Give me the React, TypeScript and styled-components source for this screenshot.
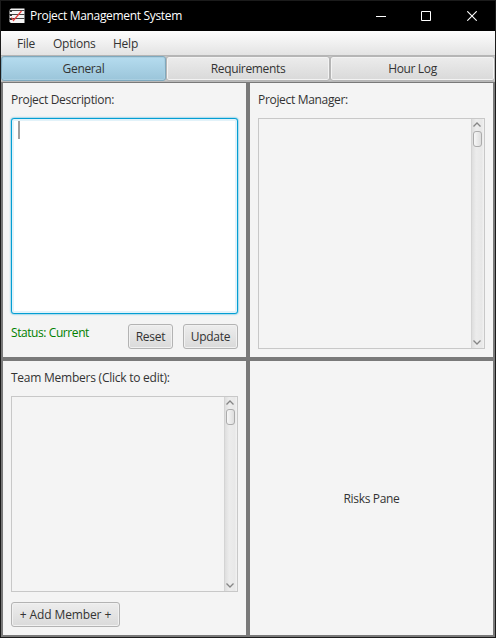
import React from "react";
import styled, { createGlobalStyle } from "styled-components";

const GlobalStyle = createGlobalStyle`
  html, body { margin: 0; padding: 0; background: #1b1b1b; }
  *, *::before, *::after { box-sizing: border-box; }
  button, textarea { font: inherit; color: inherit; letter-spacing: inherit; margin: 0; }
`;

const Window = styled.div`
  width: 496px;
  height: 638px;
  display: flex;
  flex-direction: column;
  border: 1px solid #1b1b1b;
  overflow: hidden;
  font-family: "Open Sans", "Noto Sans", sans-serif;
  font-size: 12px;
  line-height: 16px;
  letter-spacing: -0.24px;
  color: #333;
  background: #f4f4f4;
`;

const TitleBar = styled.header`
  flex: none;
  height: 30px;
  display: flex;
  align-items: center;
  padding-left: 8px;
  background: #000;
  color: #fff;
`;

const Title = styled.span`
  flex: 1;
  margin-left: 5px;
  letter-spacing: -0.32px;
  white-space: nowrap;
`;

const WindowButton = styled.button`
  width: 44px;
  height: 30px;
  padding: 0;
  border: 0;
  background: transparent;
  display: flex;
  align-items: center;
  justify-content: center;
`;

const WindowButtons = styled.div`
  display: grid;
  grid-template-columns: 45px 46px 46px;
  justify-items: center;
`;

const MenuBar = styled.nav`
  flex: none;
  height: 25px;
  display: flex;
  align-items: center;
  gap: 18px;
  padding: 2px 16px 0;
  background: linear-gradient(#fdfdfd, #e3e3e3);
  border-bottom: 1px solid #b5b5b5;
`;

const MenuItem = styled.span<{ $width: number }>`
  width: ${(p) => p.$width}px;
  white-space: nowrap;
`;

const Tabs = styled.div`
  flex: none;
  height: 26px;
  display: grid;
  grid-template-columns: 165px 164px 165px;
  background: #c4c4c4;
  border-bottom: 1px solid #b9b9b9;
`;

const Tab = styled.button<{ $active?: boolean }>`
  height: 25px;
  padding: 1px 0 0;
  letter-spacing: -0.34px;
  border: 1px solid ${(p) => (p.$active ? "#7fa9be" : "#b5b5b5")};
  border-radius: 3px;
  background: ${(p) =>
    p.$active ? "linear-gradient(#b5dcef, #9bc5da)" : "linear-gradient(#ececec, #d9d9d9)"};
  box-shadow: inset 0 0 0 1px ${(p) => (p.$active ? "#aacfe1" : "#f3f3f3")};
`;

const Panes = styled.main`
  flex: 1;
  display: grid;
  grid-template-columns: 243px 243px;
  grid-template-rows: 274px 274px;
  gap: 4px;
  padding: 1px 2px 2px;
  background: #797979;
`;

const Pane = styled.section<{ $centered?: boolean }>`
  display: flex;
  flex-direction: column;
  padding: 9px 8px 8px;
  background: #f4f4f4;
  ${(p) => p.$centered && "align-items: center; justify-content: center; letter-spacing: -0.34px;"}
`;

const Heading = styled.div<{ $spacing?: number }>`
  height: 26px;
  letter-spacing: ${(p) => p.$spacing ?? -0.32}px;
  white-space: nowrap;
`;

const Description = styled.textarea`
  display: block;
  width: 227px;
  height: 196px;
  padding: 4px 7px;
  resize: none;
  border: 1px solid #039ed3;
  border-radius: 3px;
  outline: 0;
  background: #fff;
  box-shadow: 0 0 2px #039ed3, inset 0 0 0 2px #e2f2f9;
  caret-color: transparent;
`;

const Editor = styled.div`
  position: relative;
`;

const Caret = styled.div`
  position: absolute;
  left: 7px;
  top: 3px;
  width: 2px;
  height: 18px;
  background: #a0a0a0;
`;

const List = styled.div<{ $height: number }>`
  width: 227px;
  height: ${(p) => p.$height}px;
  display: flex;
  justify-content: flex-end;
  border: 1px solid #c8c8c8;
`;

const ScrollTrack = styled.div`
  width: 13px;
  display: flex;
  flex-direction: column;
  align-items: flex-start;
  justify-content: space-between;
  padding: 3px 0 3px 1px;
  border-left: 1px solid #d4d4d4;
  background: linear-gradient(90deg, #dedede, #ececec 35%, #e8e8e8 80%, #f2f2f2);
`;

const ScrollThumb = styled.div`
  width: 9px;
  height: 16px;
  margin-top: 4px;
  border: 1px solid #ababab;
  border-radius: 3px;
  background: linear-gradient(90deg, #f7f7f7, #dedede);
`;

const ScrollTop = styled.div`
  display: flex;
  flex-direction: column;
  align-items: flex-start;
`;

const Actions = styled.div`
  display: flex;
  gap: 10px;
  margin-top: 10px;
`;

const Status = styled.span`
  width: 107px;
  padding-top: 1px;
  color: #008000;
  letter-spacing: -0.42px;
  white-space: nowrap;
`;

const Button = styled.button<{ $width: number; $spacing?: number }>`
  width: ${(p) => p.$width}px;
  height: 25px;
  padding: 1px 0 0;
  letter-spacing: ${(p) => p.$spacing ?? -0.24}px;
  border: 1px solid #b3b3b3;
  border-radius: 3px;
  background: linear-gradient(#ededed, #dadada);
  box-shadow: inset 0 0 0 1px #f1f1f1;
  white-space: nowrap;
`;

const Arrow = ({ down = false }: { down?: boolean }) => (
  <svg width="8" height="5" viewBox="0 0 8 5" fill="none" stroke="#858585" strokeWidth="1.3" display="block">
    <path d={down ? "M.5 .5 4 4 7.5 .5" : "M.5 4.5 4 1 7.5 4.5"} />
  </svg>
);

const ScrollList = ({ height }: { height: number }) => (
  <List $height={height}>
    <ScrollTrack>
      <ScrollTop>
        <Arrow />
        <ScrollThumb />
      </ScrollTop>
      <Arrow down />
    </ScrollTrack>
  </List>
);

const AppIcon = () => (
  <svg width="16" height="16" viewBox="0 0 16 16">
    <path fill="#f4f4f4" d="M2 .5h13.5v14.5H2L.5 14V2z" />
    <path stroke="#444" strokeWidth="1" d="M0 2.5h15.5M0 6.5h15.5M0 10.5h15.5" />
    <path stroke="#333" strokeWidth="2" d="M1 3h2M1 7h2M1 11h2" />
    <path fill="none" stroke="#e83b3b" strokeWidth="1.2" d="M2.5 9.5 4.5 12.5 12.5 3" />
  </svg>
);

export default function App() {
  return (
    <>
      <GlobalStyle />
      <Window>
        <TitleBar>
          <AppIcon />
          <Title>Project Management System</Title>
          <WindowButtons>
            <WindowButton aria-label="Minimize">
              <svg width="10" height="10" stroke="#fff">
                <path d="M0 5.5h10" />
              </svg>
            </WindowButton>
            <WindowButton aria-label="Maximize">
              <svg width="10" height="10" stroke="#fff" fill="none">
                <path d="M.5 .5h9v9h-9z" />
              </svg>
            </WindowButton>
            <WindowButton aria-label="Close">
              <svg width="10" height="10" stroke="#fff" strokeWidth="1.1">
                <path d="M.3 .3l9.4 9.4M9.7 .3.3 9.7" />
              </svg>
            </WindowButton>
          </WindowButtons>
        </TitleBar>
        <MenuBar>
          <MenuItem $width={18}>File</MenuItem>
          <MenuItem $width={42}>Options</MenuItem>
          <MenuItem $width={26}>Help</MenuItem>
        </MenuBar>
        <Tabs>
          <Tab $active>General</Tab>
          <Tab>Requirements</Tab>
          <Tab>Hour Log</Tab>
        </Tabs>
        <Panes>
          <Pane>
            <Heading>Project Description:</Heading>
            <Editor>
              <Description aria-label="Project Description" />
              <Caret />
            </Editor>
            <Actions>
              <Status>Status: Current</Status>
              <Button $width={45}>Reset</Button>
              <Button $width={55}>Update</Button>
            </Actions>
          </Pane>
          <Pane>
            <Heading>Project Manager:</Heading>
            <ScrollList height={231} />
          </Pane>
          <Pane>
            <Heading $spacing={-0.24}>Team Members (Click to edit):</Heading>
            <ScrollList height={196} />
            <Actions>
              <Button $width={109} $spacing={-0.12}>+ Add Member +</Button>
            </Actions>
          </Pane>
          <Pane $centered>Risks Pane</Pane>
        </Panes>
      </Window>
    </>
  );
}
